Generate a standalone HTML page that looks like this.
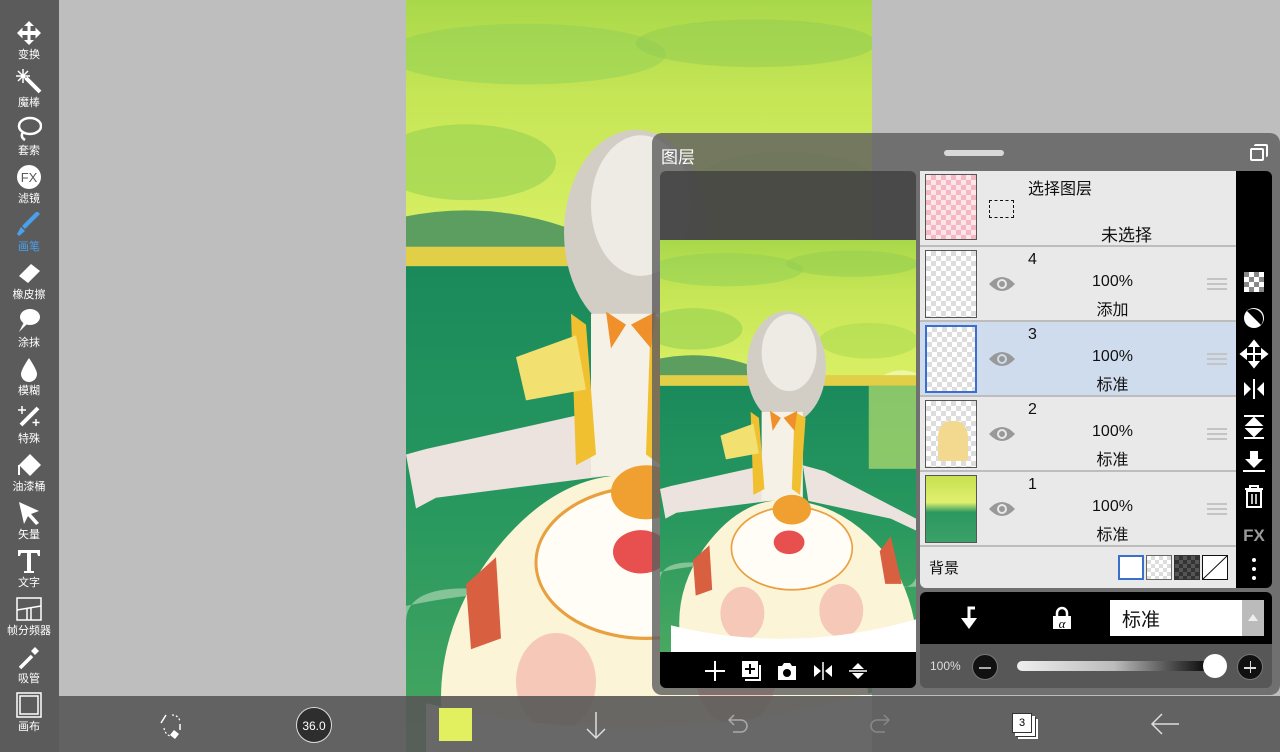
<!DOCTYPE html>
<html><head><meta charset="utf-8"><style>
*{margin:0;padding:0;box-sizing:border-box}
body{width:1280px;height:752px;overflow:hidden;background:#bebebf;font-family:"Liberation Sans","Noto Sans CJK SC",sans-serif;position:relative}
.abs{position:absolute}
#tb{left:0;top:0;width:59px;height:752px;background:#5b5b5b}
.tool{position:absolute;left:0;width:58px;text-align:center;color:#fff;font-size:11px}
.tool svg{display:block;margin:0 auto}
#bot{left:59px;top:696px;width:1221px;height:56px;background:rgba(88,88,88,.9)}
#panel{left:652px;top:133px;width:628px;height:562px;background:rgba(95,95,95,.82);border-radius:10px}
.row{position:absolute;left:920px;width:316px;background:#e9e9e9;border-bottom:2px solid #bdbdbd}
.thumb{position:absolute;left:5px;top:3px;width:52px;height:68px;border:1px solid #555;background-color:#fff;background-image:linear-gradient(45deg,#ddd 25%,transparent 25%,transparent 75%,#ddd 75%),linear-gradient(45deg,#ddd 25%,transparent 25%,transparent 75%,#ddd 75%);background-size:10px 10px;background-position:0 0,5px 5px}
.num{position:absolute;left:108px;top:4px;font-size:16px;color:#111}
.pct{position:absolute;left:150px;width:85px;text-align:center;top:26px;font-size:16px;color:#111}
.mode{position:absolute;left:150px;width:85px;text-align:center;top:49px;font-size:16px;color:#111}
.eye{position:absolute;left:68px;top:27px}
.hd{position:absolute;left:287px;top:31px;width:20px;height:12px;border-top:2px solid #c4c4c4;border-bottom:2px solid #c4c4c4}
.hd:after{content:"";position:absolute;left:0;top:3px;width:20px;border-top:2px solid #c4c4c4}
</style></head><body>

<svg width="0" height="0" style="position:absolute">
<defs>
<linearGradient id="sky" x1="0" y1="0" x2="0" y2="1"><stop offset="0" stop-color="#a8d84a"/><stop offset=".3" stop-color="#c6e656"/><stop offset="1" stop-color="#e2f46c"/></linearGradient>
<linearGradient id="sea" x1="0" y1="0" x2="0" y2="1"><stop offset="0" stop-color="#1a8a5c"/><stop offset=".5" stop-color="#28985f"/><stop offset="1" stop-color="#48a860"/></linearGradient>
<symbol id="art" viewBox="0 0 466 695" preserveAspectRatio="none">
<rect width="466" height="300" fill="url(#sky)"/>
<ellipse cx="120" cy="50" rx="140" ry="28" fill="#92cf56" opacity=".5"/>
<ellipse cx="350" cy="40" rx="120" ry="22" fill="#92cb52" opacity=".5"/>
<ellipse cx="60" cy="150" rx="90" ry="35" fill="#8ccb50" opacity=".5"/>
<ellipse cx="380" cy="170" rx="90" ry="30" fill="#a8d850" opacity=".5"/>
<ellipse cx="440" cy="270" rx="60" ry="50" fill="#f2fbc0" opacity=".7"/>
<path d="M0 200 Q80 185 160 210 L220 235 L0 235Z" fill="#5c9e60"/>
<rect y="228" width="466" height="20" fill="#e2cf48"/>
<rect y="246" width="466" height="449" fill="url(#sea)"/>
<rect x="380" y="246" width="86" height="140" fill="#b8e070" opacity=".7"/>
<path d="M0 560 Q150 530 300 570 T466 570 L466 585 Q300 585 150 555 T0 575Z" fill="#d8ead0" opacity=".5"/>
<path d="M0 420 L20 415 L190 380 L200 440 L30 460 L10 470Z" fill="#ece2de"/>
<path d="M260 380 L300 390 L466 470 L466 490 L420 470 L270 440Z" fill="#ece2de"/>
<ellipse cx="230" cy="215" rx="72" ry="95" fill="#d2cec6"/>
<ellipse cx="235" cy="190" rx="50" ry="65" fill="#eeebe4"/>
<rect x="185" y="290" width="75" height="150" fill="#f6f1e6"/>
<path d="M165 290 L180 300 L190 420 L170 430Z" fill="#f0c030"/>
<path d="M245 290 L265 300 L255 430 L240 420Z" fill="#f0c030"/>
<path d="M110 330 L170 310 L180 360 L120 370Z" fill="#f2e070"/>
<path d="M220 300 L200 288 L205 322Z M225 300 L250 288 L245 322Z" fill="#f0902a"/>
<path d="M40 690 Q20 600 80 520 Q150 430 240 440 Q340 445 420 540 Q470 620 466 690Z" fill="#fbf4d6"/>
<ellipse cx="240" cy="520" rx="110" ry="70" fill="#fffdf5" stroke="#e8a040" stroke-width="3"/>
<ellipse cx="235" cy="510" rx="28" ry="20" fill="#e85050"/>
<ellipse cx="240" cy="455" rx="35" ry="25" fill="#f0a030"/>
<path d="M60 540 L90 515 L95 590 L65 600Z" fill="#d86040"/>
<path d="M400 525 L420 500 L440 580 L410 580Z" fill="#d86040"/>
<ellipse cx="150" cy="630" rx="40" ry="45" fill="#f6c8b8"/>
<ellipse cx="330" cy="625" rx="40" ry="45" fill="#f6c8b8"/>
<path d="M20 650 Q240 700 466 640 L466 695 L20 695Z" fill="#ffffff"/>
</symbol>
</defs>
</svg>

<svg class="abs" style="left:406px;top:0" width="467" height="752"><use href="#art" width="466" height="752"/></svg>

<div id="tb" class="abs">
<div class="tool" style="top:20px"><svg width="26" height="26" viewBox="0 0 26 26" fill="#fff"><path d="M13 1l5 5h-3.5v5h5V7.5L25 13l-5.5 5.5V15h-5v5H18l-5 5-5-5h3.5v-5h-5v3.5L1 13l5.5-5.5V11h5V6H8z"/></svg>变换</div>
<div class="tool" style="top:68px"><svg width="26" height="26" viewBox="0 0 26 26"><path d="M10 10L24 24" stroke="#fff" stroke-width="4"/><path d="M7 1v14M0 8h14M2 3l10 10M12 3L2 13" stroke="#fff" stroke-width="1.5"/></svg>魔棒</div>
<div class="tool" style="top:116px"><svg width="26" height="26" viewBox="0 0 26 26"><ellipse cx="14" cy="10" rx="11" ry="8" fill="none" stroke="#fff" stroke-width="2.5"/><path d="M7 16q-3 5 2 8" stroke="#fff" stroke-width="2.5" fill="none"/></svg>套索</div>
<div class="tool" style="top:164px"><svg width="26" height="26" viewBox="0 0 26 26"><circle cx="13" cy="13" r="12" fill="#fff"/><text x="13" y="18" font-size="13" text-anchor="middle" fill="#5b5b5b" font-family="Liberation Sans">FX</text></svg>滤镜</div>
<div class="tool" style="top:212px;color:#4aa0ee"><svg width="26" height="26" viewBox="0 0 26 26"><path d="M24 2L9 17l-3-3L21-1z" fill="#4aa0ee"/><path d="M5 15l4 4-6 5-2-2z" fill="#4aa0ee"/></svg>画笔</div>
<div class="tool" style="top:260px"><svg width="26" height="26" viewBox="0 0 26 26"><path d="M3 16L15 4l9 7-12 12z" fill="#fff"/></svg>橡皮擦</div>
<div class="tool" style="top:308px"><svg width="26" height="26" viewBox="0 0 26 26"><ellipse cx="14" cy="9" rx="10" ry="8" fill="#fff"/><path d="M8 14l-5 10 9-9z" fill="#fff"/></svg>涂抹</div>
<div class="tool" style="top:356px"><svg width="26" height="26" viewBox="0 0 26 26"><path d="M13 2Q5 14 5 18a8 8 0 0016 0Q21 14 13 2z" fill="#fff"/></svg>模糊</div>
<div class="tool" style="top:404px"><svg width="26" height="26" viewBox="0 0 26 26"><path d="M22 4L5 21" stroke="#fff" stroke-width="4"/><path d="M6 2v8M2 6h8M20 15v7M16.5 18.5h7" stroke="#fff" stroke-width="1.5"/></svg>特殊</div>
<div class="tool" style="top:452px"><svg width="26" height="26" viewBox="0 0 26 26"><path d="M14 2l11 11-11 11L3 13z" fill="#fff"/><path d="M3 13v10" stroke="#fff" stroke-width="2"/></svg>油漆桶</div>
<div class="tool" style="top:500px"><svg width="26" height="26" viewBox="0 0 26 26"><path d="M3 2l20 9-8 3 8 9-3 2-8-9-4 8z" fill="#fff"/></svg>矢量</div>
<div class="tool" style="top:548px"><svg width="26" height="26" viewBox="0 0 26 26"><path d="M2 2h22v6h-2l-1-3h-6v18h3v2H8v-2h3V5H5L4 8H2z" fill="#fff"/></svg>文字</div>
<div class="tool" style="top:596px"><svg width="28" height="26" viewBox="0 0 28 26" fill="none" stroke="#fff" stroke-width="1.5"><rect x="2" y="2" width="24" height="22"/><path d="M2 14l24-4M12 12v12M16 12v12"/></svg>帧分频器</div>
<div class="tool" style="top:644px"><svg width="26" height="26" viewBox="0 0 26 26"><path d="M4 24l12-12" stroke="#fff" stroke-width="3.5"/><path d="M15 7l4-4 4 4-4 4z" fill="#fff"/></svg>吸管</div>
<div class="tool" style="top:692px"><svg width="28" height="26" viewBox="0 0 28 26" fill="none" stroke="#fff" stroke-width="1.5"><rect x="2" y="1" width="24" height="24"/><rect x="5" y="4" width="18" height="18"/></svg>画布</div>
</div>

<div id="bot" class="abs">
<svg class="abs" style="left:99px;top:16px" width="28" height="28" viewBox="0 0 28 28"><path d="M8 3l-5 8M22 12v6" stroke="#fff" stroke-width="1.5" fill="none"/><path d="M16 18l5 4-4 5-5-4z" fill="#fff"/><path d="M6 16q1 6 6 8M14 3q6 0 8 6" stroke="#fff" stroke-width="1.2" fill="none" stroke-dasharray="2 2"/></svg>
<div class="abs" style="left:237px;top:11px;width:36px;height:36px;border-radius:50%;background:#2e2e2e;border:1px solid #ddd;color:#fff;font-size:12px;text-align:center;line-height:36px">36.0</div>
<div class="abs" style="left:380px;top:12px;width:33px;height:33px;background:#e2f060"></div>
<svg class="abs" style="left:525px;top:14px" width="24" height="30"><path d="M12 2v26M3 19l9 9 9-9" stroke="#ddd" stroke-width="1.5" fill="none"/></svg>
<svg class="abs" style="left:666px;top:16px" width="26" height="24"><path d="M4 8h12a6 6 0 010 12H8M9 3L4 8l5 5" stroke="#aaa" stroke-width="1.5" fill="none"/></svg>
<svg class="abs" style="left:808px;top:16px" width="26" height="24"><path d="M22 8H10a6 6 0 000 12h8M17 3l5 5-5 5" stroke="#888" stroke-width="1.5" fill="none"/></svg>
<div class="abs" style="left:953px;top:17px;width:20px;height:20px;background:#fff;border:1px solid #333;box-shadow:3px 3px 0 #fff,4px 4px 0 #333,6px 6px 0 #fff;font-size:11px;text-align:center;line-height:18px;color:#000">3</div>
<svg class="abs" style="left:1090px;top:16px" width="32" height="24"><path d="M30 12H3M13 2L3 12l10 10" stroke="#ddd" stroke-width="1.5" fill="none"/></svg>
</div>

<div id="panel" class="abs"></div>
<div class="abs" style="left:661px;top:143px;color:#fff;font-size:17px">图层</div>
<div class="abs" style="left:944px;top:150px;width:60px;height:6px;border-radius:3px;background:#d8d8d8"></div>
<div class="abs" style="left:1250px;top:148px;width:14px;height:13px;border:2px solid #fff;border-radius:2px"></div>
<div class="abs" style="left:1254px;top:144px;width:14px;height:13px;border-top:2px solid #fff;border-right:2px solid #fff;border-radius:2px"></div>

<div class="abs" style="left:660px;top:171px;width:256px;height:517px;background:rgba(60,60,60,.75);border-radius:6px;overflow:hidden">
<svg class="abs" style="left:0;top:69px" width="256" height="412"><use href="#art" width="256" height="412"/></svg>
<div class="abs" style="left:0;top:481px;width:256px;height:36px;background:#000"></div>
<svg class="abs" style="left:44px;top:488px" width="180" height="24" fill="#fff">
<path d="M11 2v20M1 12h20" stroke="#fff" stroke-width="2"/>
<rect x="38" y="2" width="16" height="16" fill="#fff"/><path d="M46 5v10M41 10h10" stroke="#000" stroke-width="2"/><path d="M56 6v15H41" stroke="#fff" stroke-width="2" fill="none"/>
<path d="M74 7h4l2-3h6l2 3h4v14H74z"/><circle cx="83" cy="14" r="4" fill="#000"/>
<path d="M110 6l7 6-7 6zM128 6l-7 6 7 6z"/><path d="M119 3v18" stroke="#fff" stroke-width="1.5"/>
<path d="M145 2h18M145 22h18M154 4l-6 6h12zM154 20l-6-6h12z"/><path d="M145 12h18" stroke="#fff" stroke-width="1.5"/>
</svg>
</div>

<div class="row" style="top:171px;height:76px">
<div class="thumb" style="top:3px;height:66px;background-color:#fde6ea;background-image:linear-gradient(45deg,#f5b8c2 25%,transparent 25%,transparent 75%,#f5b8c2 75%),linear-gradient(45deg,#f5b8c2 25%,transparent 25%,transparent 75%,#f5b8c2 75%)"></div>
<div class="abs" style="left:108px;top:4px;font-size:16px;color:#111">选择图层</div>
<div class="abs" style="left:69px;top:29px;width:25px;height:18px;border:1px dashed #111"></div>
<div class="abs" style="left:181px;top:50px;font-size:17px;color:#111">未选择</div>
</div>
<div class="row" style="top:247px;height:75px"><div class="thumb"></div><svg class="eye" width="28" height="20"><path d="M1 10Q14-4 27 10Q14 24 1 10z" fill="#999"/><circle cx="14" cy="10" r="5" fill="#e9e9e9"/><circle cx="14" cy="10" r="3" fill="#999"/></svg><div class="num">4</div><div class="pct">100%</div><div class="mode">添加</div><div class="hd"></div></div>
<div class="row" style="top:322px;height:75px;background:#cfdcee"><div class="thumb" style="border:2px solid #3a6fd0"></div><svg class="eye" width="28" height="20"><path d="M1 10Q14-4 27 10Q14 24 1 10z" fill="#999"/><circle cx="14" cy="10" r="5" fill="#cfdcee"/><circle cx="14" cy="10" r="3" fill="#999"/></svg><div class="num">3</div><div class="pct">100%</div><div class="mode">标准</div><div class="hd"></div></div>
<div class="row" style="top:397px;height:75px"><div class="thumb"><div style="position:absolute;left:12px;top:20px;width:30px;height:40px;border-radius:40% 40% 10% 10%;background:#f3d890"></div></div><svg class="eye" width="28" height="20"><path d="M1 10Q14-4 27 10Q14 24 1 10z" fill="#999"/><circle cx="14" cy="10" r="5" fill="#e9e9e9"/><circle cx="14" cy="10" r="3" fill="#999"/></svg><div class="num">2</div><div class="pct">100%</div><div class="mode">标准</div><div class="hd"></div></div>
<div class="row" style="top:472px;height:75px"><div class="thumb" style="background:linear-gradient(#c8e050 0%,#e0f070 40%,#2c9860 55%,#3aa068 100%)"></div><svg class="eye" width="28" height="20"><path d="M1 10Q14-4 27 10Q14 24 1 10z" fill="#999"/><circle cx="14" cy="10" r="5" fill="#e9e9e9"/><circle cx="14" cy="10" r="3" fill="#999"/></svg><div class="num">1</div><div class="pct">100%</div><div class="mode">标准</div><div class="hd"></div></div>
<div class="row" style="top:547px;height:41px;border:none;border-radius:0 0 0 6px">
<div class="abs" style="left:9px;top:10px;font-size:15px;color:#111">背景</div>
<div class="abs" style="left:198px;top:8px;width:26px;height:25px;background:#fff;border:2px solid #3a6fd0"></div>
<div class="abs" style="left:226px;top:8px;width:26px;height:25px;border:1px solid #666;background-color:#fff;background-image:linear-gradient(45deg,#ddd 25%,transparent 25%,transparent 75%,#ddd 75%),linear-gradient(45deg,#ddd 25%,transparent 25%,transparent 75%,#ddd 75%);background-size:8px 8px;background-position:0 0,4px 4px"></div>
<div class="abs" style="left:254px;top:8px;width:26px;height:25px;border:1px solid #333;background-color:#555;background-image:linear-gradient(45deg,#333 25%,transparent 25%,transparent 75%,#333 75%),linear-gradient(45deg,#333 25%,transparent 25%,transparent 75%,#333 75%);background-size:8px 8px;background-position:0 0,4px 4px"></div>
<svg class="abs" style="left:282px;top:8px" width="26" height="25"><rect x=".5" y=".5" width="25" height="24" fill="#fff" stroke="#111"/><path d="M1 24L25 1" stroke="#111"/></svg>
</div>

<div class="abs" style="left:1236px;top:171px;width:36px;height:417px;background:#000;border-radius:0 6px 6px 0"></div>
<svg class="abs" style="left:1236px;top:265px" width="36" height="320">
<rect x="8" y="7" width="20" height="20" fill="#fff"/><path d="M8 7h5v5H8zM18 7h5v5h-5zM13 12h5v5h-5zM23 12h5v5h-5zM8 17h5v5H8zM18 17h5v5h-5zM13 22h5v5h-5zM23 22h5v5h-5z" fill="#888"/>
<circle cx="18" cy="53" r="10" fill="#fff"/><path d="M11 46l14 14A10 10 0 0011 46z" fill="#000"/>
<path d="M18 78v22M7 89h22M18 76l-4 5h8zM18 102l-4-5h8zM5 89l5-4v8zM31 89l-5-4v8z" stroke="#fff" stroke-width="2" fill="#fff"/>
<path d="M8 117l7 7-7 7zM28 117l-7 7 7 7z" fill="#fff"/><path d="M18 114v20" stroke="#fff" stroke-width="2"/>
<path d="M8 151h20M8 173h20M18 153l-7 7h14zM18 171l-7-7h14z" stroke="#fff" stroke-width="2" fill="#fff"/>
<path d="M14 186h8v8h5l-9 9-9-9h5z" fill="#fff"/><path d="M7 206h22" stroke="#fff" stroke-width="2"/>
<path d="M9 224h18M14 224v-3h8v3M11 226h14v16H11z" stroke="#fff" stroke-width="2" fill="none"/><path d="M16 229v10M20 229v10" stroke="#fff" stroke-width="1.5"/>
<text x="18" y="276" font-size="17" font-weight="bold" text-anchor="middle" fill="#9a9a9a" font-family="Liberation Sans">FX</text>
<circle cx="18" cy="295" r="2" fill="#fff"/><circle cx="18" cy="304" r="2" fill="#fff"/><circle cx="18" cy="313" r="2" fill="#fff"/>
</svg>

<div class="abs" style="left:920px;top:592px;width:352px;height:52px;background:#000;border-radius:6px 6px 0 0"></div>
<svg class="abs" style="left:955px;top:604px" width="26" height="28"><path d="M20 4h-6v12" stroke="#fff" stroke-width="3" fill="none"/><path d="M6 14h16l-8 11z" fill="#fff"/></svg>
<svg class="abs" style="left:1050px;top:605px" width="24" height="26"><path d="M7 11V8a5 5 0 0110 0v3" stroke="#fff" stroke-width="2.5" fill="none"/><rect x="3" y="11" width="18" height="13" fill="#fff"/><text x="12" y="23" font-size="13" font-style="italic" text-anchor="middle" fill="#000" font-family="Liberation Serif">α</text></svg>
<div class="abs" style="left:1110px;top:600px;width:132px;height:36px;background:#fff;font-size:19px;color:#111;padding:5px 0 0 12px">标准</div>
<div class="abs" style="left:1242px;top:600px;width:22px;height:36px;background:#bbb"><div style="position:absolute;left:6px;top:14px;border-left:5px solid transparent;border-right:5px solid transparent;border-bottom:7px solid #eee"></div></div>

<div class="abs" style="left:920px;top:644px;width:352px;height:44px;background:#575757;border-radius:0 0 6px 6px"></div>
<div class="abs" style="left:930px;top:659px;font-size:12px;color:#ddd">100%</div>
<div class="abs" style="left:972px;top:654px;width:26px;height:26px;border-radius:50%;background:#111;border:1px solid #777"><div style="position:absolute;left:6px;top:12px;width:12px;height:1.5px;background:#aaa"></div></div>
<div class="abs" style="left:1017px;top:661px;width:195px;height:10px;border-radius:5px;background:linear-gradient(90deg,#eee,#bbb 50%,#000)"></div>
<div class="abs" style="left:1203px;top:654px;width:24px;height:24px;border-radius:50%;background:#fff"></div>
<div class="abs" style="left:1237px;top:654px;width:26px;height:26px;border-radius:50%;background:#111;border:1px solid #777"><div style="position:absolute;left:6px;top:12px;width:12px;height:1.5px;background:#ddd"></div><div style="position:absolute;left:11.5px;top:6px;width:1.5px;height:12px;background:#ddd"></div></div>
</body></html>
